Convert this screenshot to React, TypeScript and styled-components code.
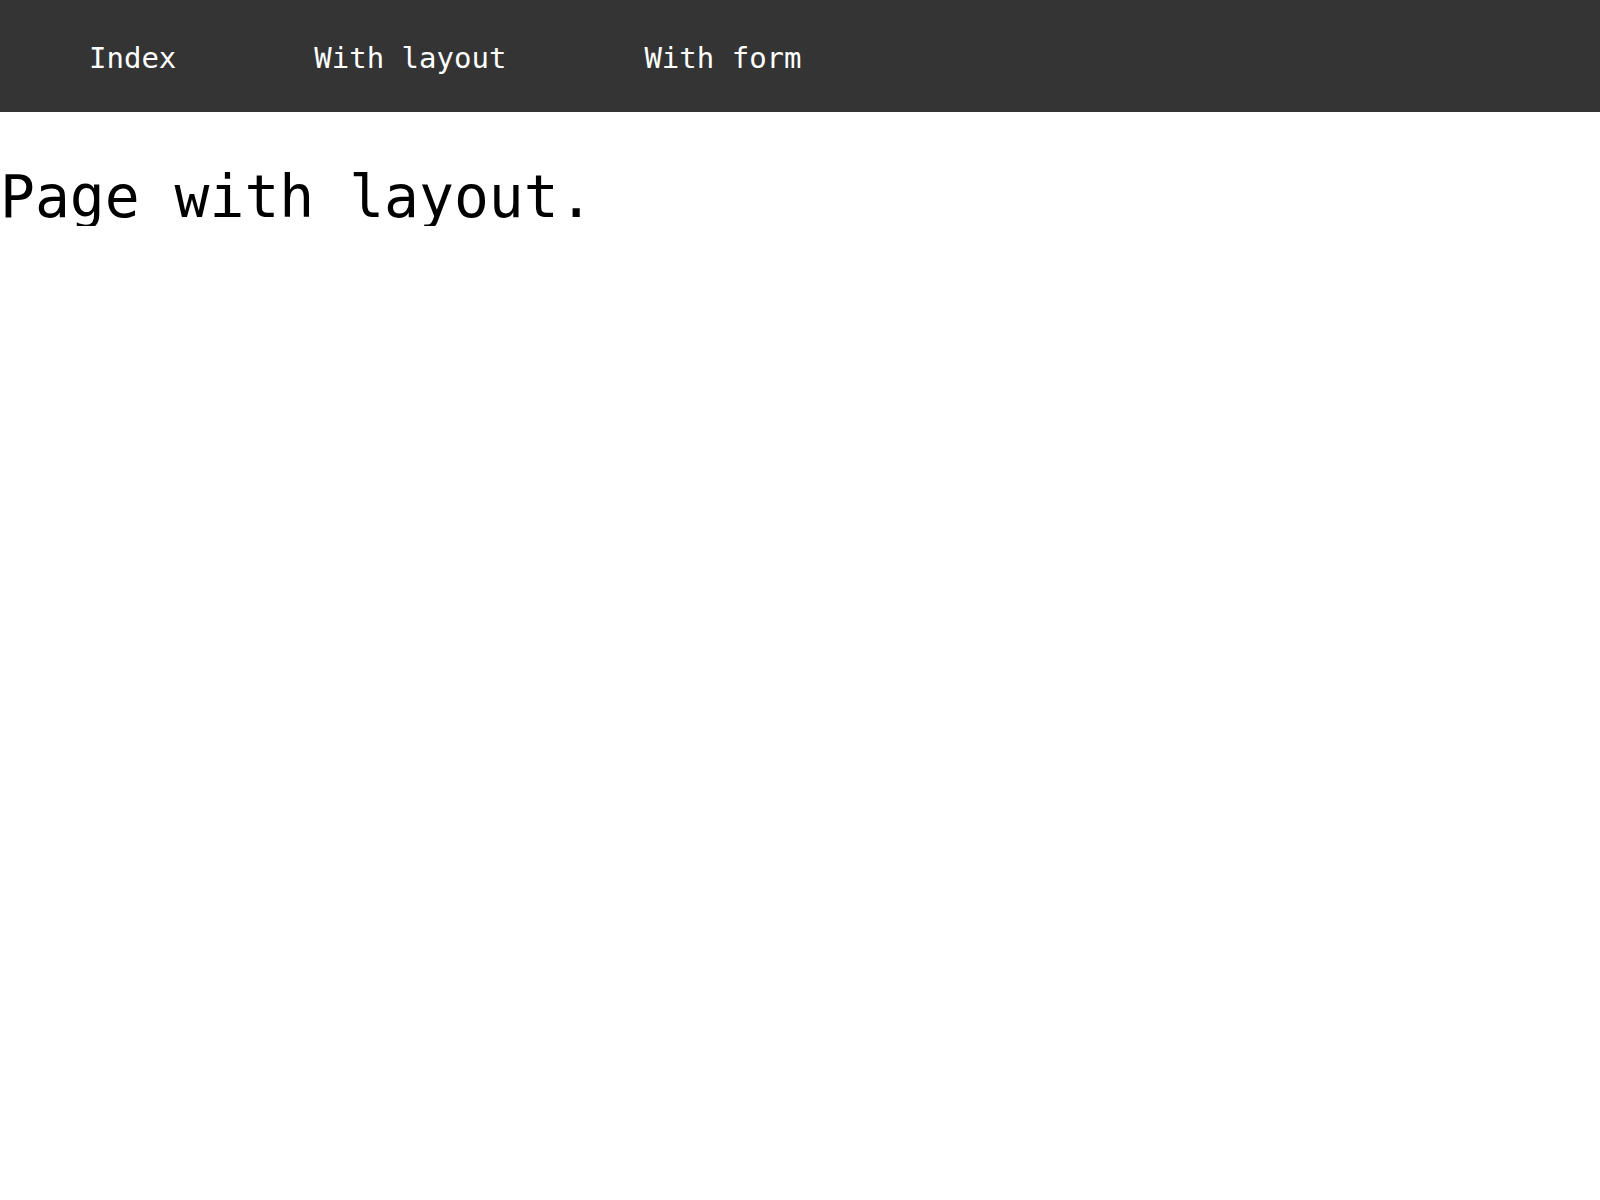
import React from "react";
import styled, { createGlobalStyle } from "styled-components";

const Global = createGlobalStyle`
  html, body { margin: 0; padding: 0; background: #ffffff; }
  body { font-family: "DejaVu Sans Mono", "Liberation Mono", monospace; }
`;

const NavBar = styled.nav`
  display: flex;
  align-items: center;
  box-sizing: border-box;
  height: 112px;
  background: #343434;
  padding: 4px 0 0 89px;
  gap: 138px;
`;

const NavLink = styled.a`
  color: #ffffff;
  font-size: 29px;
  text-decoration: none;
  line-height: 1;
`;

const Main = styled.main`
  padding-top: 56px;
`;

const Title = styled.h1`
  margin: 0;
  font-size: 58px;
  font-weight: normal;
  color: #000000;
  line-height: 1;
`;

export default function App() {
  return (
    <>
      <Global />
      <NavBar>
        <NavLink href="#">Index</NavLink>
        <NavLink href="#">With layout</NavLink>
        <NavLink href="#">With form</NavLink>
      </NavBar>
      <Main>
        <Title>Page with layout.</Title>
      </Main>
    </>
  );
}
